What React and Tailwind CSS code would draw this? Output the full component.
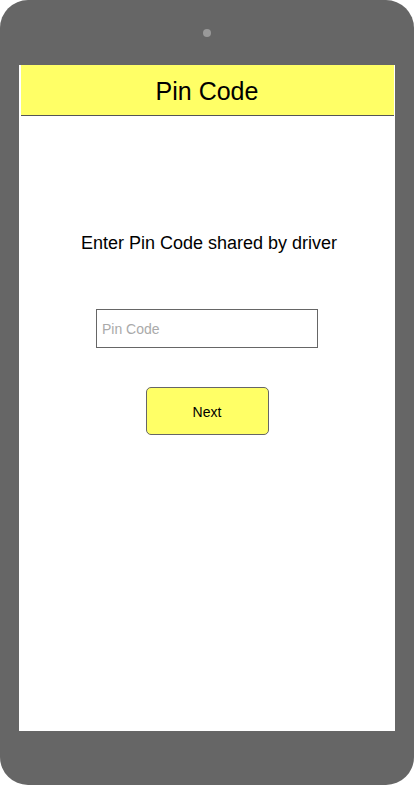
import React from 'react';

export default function App() {
  return (
    <div className="w-[414px] h-[785px] bg-white" style={{ fontFamily: '"Liberation Sans", Arial, sans-serif' }}>
      <div className="w-full h-full bg-[#666666] rounded-[28px] flex flex-col px-[19px] pb-[54px]">
        <div className="h-[65px] flex items-center justify-center">
          <div className="w-[8px] h-[8px] rounded-full bg-[#999999]" />
        </div>
        <div className="flex-1 bg-white flex flex-col items-center">
          <div className="w-[373px] h-[51px] bg-[#ffff66] border-b border-[#555555] flex items-center justify-center pt-[2px]">
            <h1 className="text-[25px] text-black leading-none">Pin Code</h1>
          </div>
          <p className="mt-[117px] pl-[4px] text-[18px] leading-[21px] text-black">Enter Pin Code shared by driver</p>
          <input
            type="text"
            placeholder="Pin Code"
            className="mt-[55px] w-[222px] h-[39px] border border-[#666666] px-[5px] text-[14px] text-black placeholder:text-[#aaaaaa] outline-none"
          />
          <button className="mt-[39px] w-[123px] h-[48px] bg-[#ffff66] border border-[#666666] rounded-[5px] pt-[2px] text-[14px] text-black">
            Next
          </button>
        </div>
      </div>
    </div>
  );
}
